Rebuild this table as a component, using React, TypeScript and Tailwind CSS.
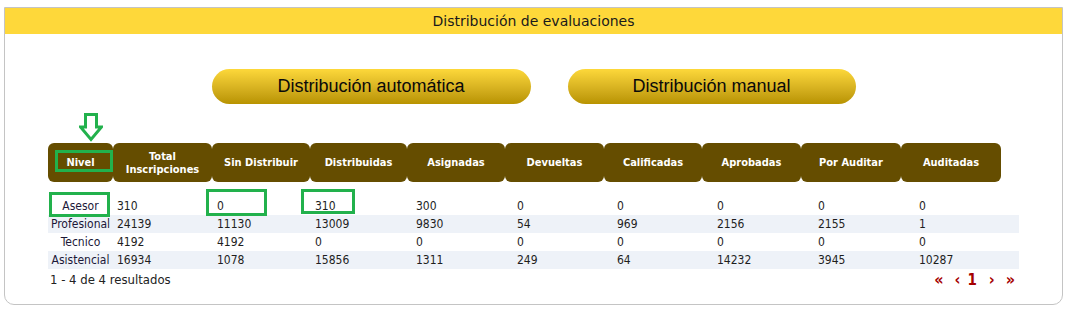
const HEADERS: { label: string; w: string }[] = [
  { label: 'Nivel', w: 'w-[65px]' },
  { label: 'Total Inscripciones', w: 'w-[99px]' },
  { label: 'Sin Distribuir', w: 'w-[98px]' },
  { label: 'Distribuidas', w: 'w-[97px]' },
  { label: 'Asignadas', w: 'w-[98px]' },
  { label: 'Devueltas', w: 'w-[99px]' },
  { label: 'Calificadas', w: 'w-[98px]' },
  { label: 'Aprobadas', w: 'w-[99px]' },
  { label: 'Por Auditar', w: 'w-[100px]' },
  { label: 'Auditadas', w: 'w-[100px]' },
];

const ROWS: string[][] = [
  ['Asesor', '310', '0', '310', '300', '0', '0', '0', '0', '0'],
  ['Profesional', '24139', '11130', '13009', '9830', '54', '969', '2156', '2155', '1'],
  ['Tecnico', '4192', '4192', '0', '0', '0', '0', '0', '0', '0'],
  ['Asistencial', '16934', '1078', '15856', '1311', '249', '64', '14232', '3945', '10287'],
];

const FONT = "font-['DejaVu_Sans_Condensed','DejaVu_Sans',sans-serif]";

function GoldButton({ label, w }: { label: string; w: string }) {
  return (
    <button
      className={`${w} h-[35px] rounded-full bg-gradient-to-b from-[#fdd83a] to-[#b89300] text-[18px] text-[#0a0a0a] font-['Liberation_Sans',Arial,sans-serif]`}
    >
      {label}
    </button>
  );
}

function Box({ className }: { className: string }) {
  return <div className={`absolute border-[3px] border-[#22b14c] ${className}`} />;
}

export default function App() {
  return (
    <div className={`pl-[4px] pt-[7px] ${FONT}`}>
      <div className="relative h-[298px] w-[1059px] rounded-b-[10px] border border-[#c4c4c4] bg-white">
        <div className="flex h-[26px] items-center justify-center bg-[#fed83a] font-['DejaVu_Sans',sans-serif] text-[14px] text-[#1a1a1a]">
          Distribución de evaluaciones
        </div>

        <div className="mt-[35px] flex justify-center gap-[37px]">
          <GoldButton label="Distribución automática" w="w-[319px]" />
          <GoldButton label="Distribución manual" w="w-[288px]" />
        </div>

        <div className="ml-[43px] mt-[39px]">
          <div className="flex h-[39px]">
            {HEADERS.map((h) => (
              <div
                key={h.label}
                className={`${h.w} flex items-center justify-center rounded-[6px] bg-[#654d00] px-1 text-center text-[11px] font-bold leading-[13px] text-white`}
              >
                {h.label}
              </div>
            ))}
          </div>

          <div className="mt-[15px] w-[971px] text-[12px] text-[#1e1e1e]">
            {ROWS.map((r, i) => (
              <div
                key={r[0]}
                className={`grid h-[18px] grid-cols-[65px_100px_98px_101px_101px_100px_100px_101px_101px_104px] items-center ${i % 2 === 1 ? 'bg-[#eef2f8]' : ''}`}
              >
                {r.map((c, j) => (
                  <div key={j} className={j === 0 ? 'text-center text-[#1c1838]' : 'pl-[4px]'}>
                    {c}
                  </div>
                ))}
              </div>
            ))}
          </div>

          <div className="flex h-[22px] w-[971px] items-center justify-between">
            <span className="pl-[2px] text-[13px] text-[#222]">1 - 4 de 4 resultados</span>
            <div className="flex items-center pr-[4px] font-bold text-[#a50000]">
              <span className="text-[16px]">«</span>
              <span className="ml-[11px] text-[16px]">‹</span>
              <span className="ml-[7px] text-[15px]">1</span>
              <span className="ml-[12px] text-[16px]">›</span>
              <span className="ml-[11px] text-[16px]">»</span>
            </div>
          </div>
        </div>

        {/* anotaciones */}
        <svg className="absolute left-[74px] top-[105px]" width="24" height="29" viewBox="0 0 24 29">
          <path
            d="M6.5 1.5 H17.5 V14 H22.5 L12 26.5 L1.5 14 H6.5 Z"
            fill="none"
            stroke="#22b14c"
            strokeWidth="3"
            strokeLinejoin="miter"
          />
        </svg>
        <Box className="left-[50px] top-[142px] h-[22px] w-[58px]" />
        <Box className="left-[44px] top-[184px] h-[25px] w-[61px]" />
        <Box className="left-[201px] top-[181px] h-[27px] w-[61px]" />
        <Box className="left-[296px] top-[181px] h-[25px] w-[54px]" />
      </div>
    </div>
  );
}
